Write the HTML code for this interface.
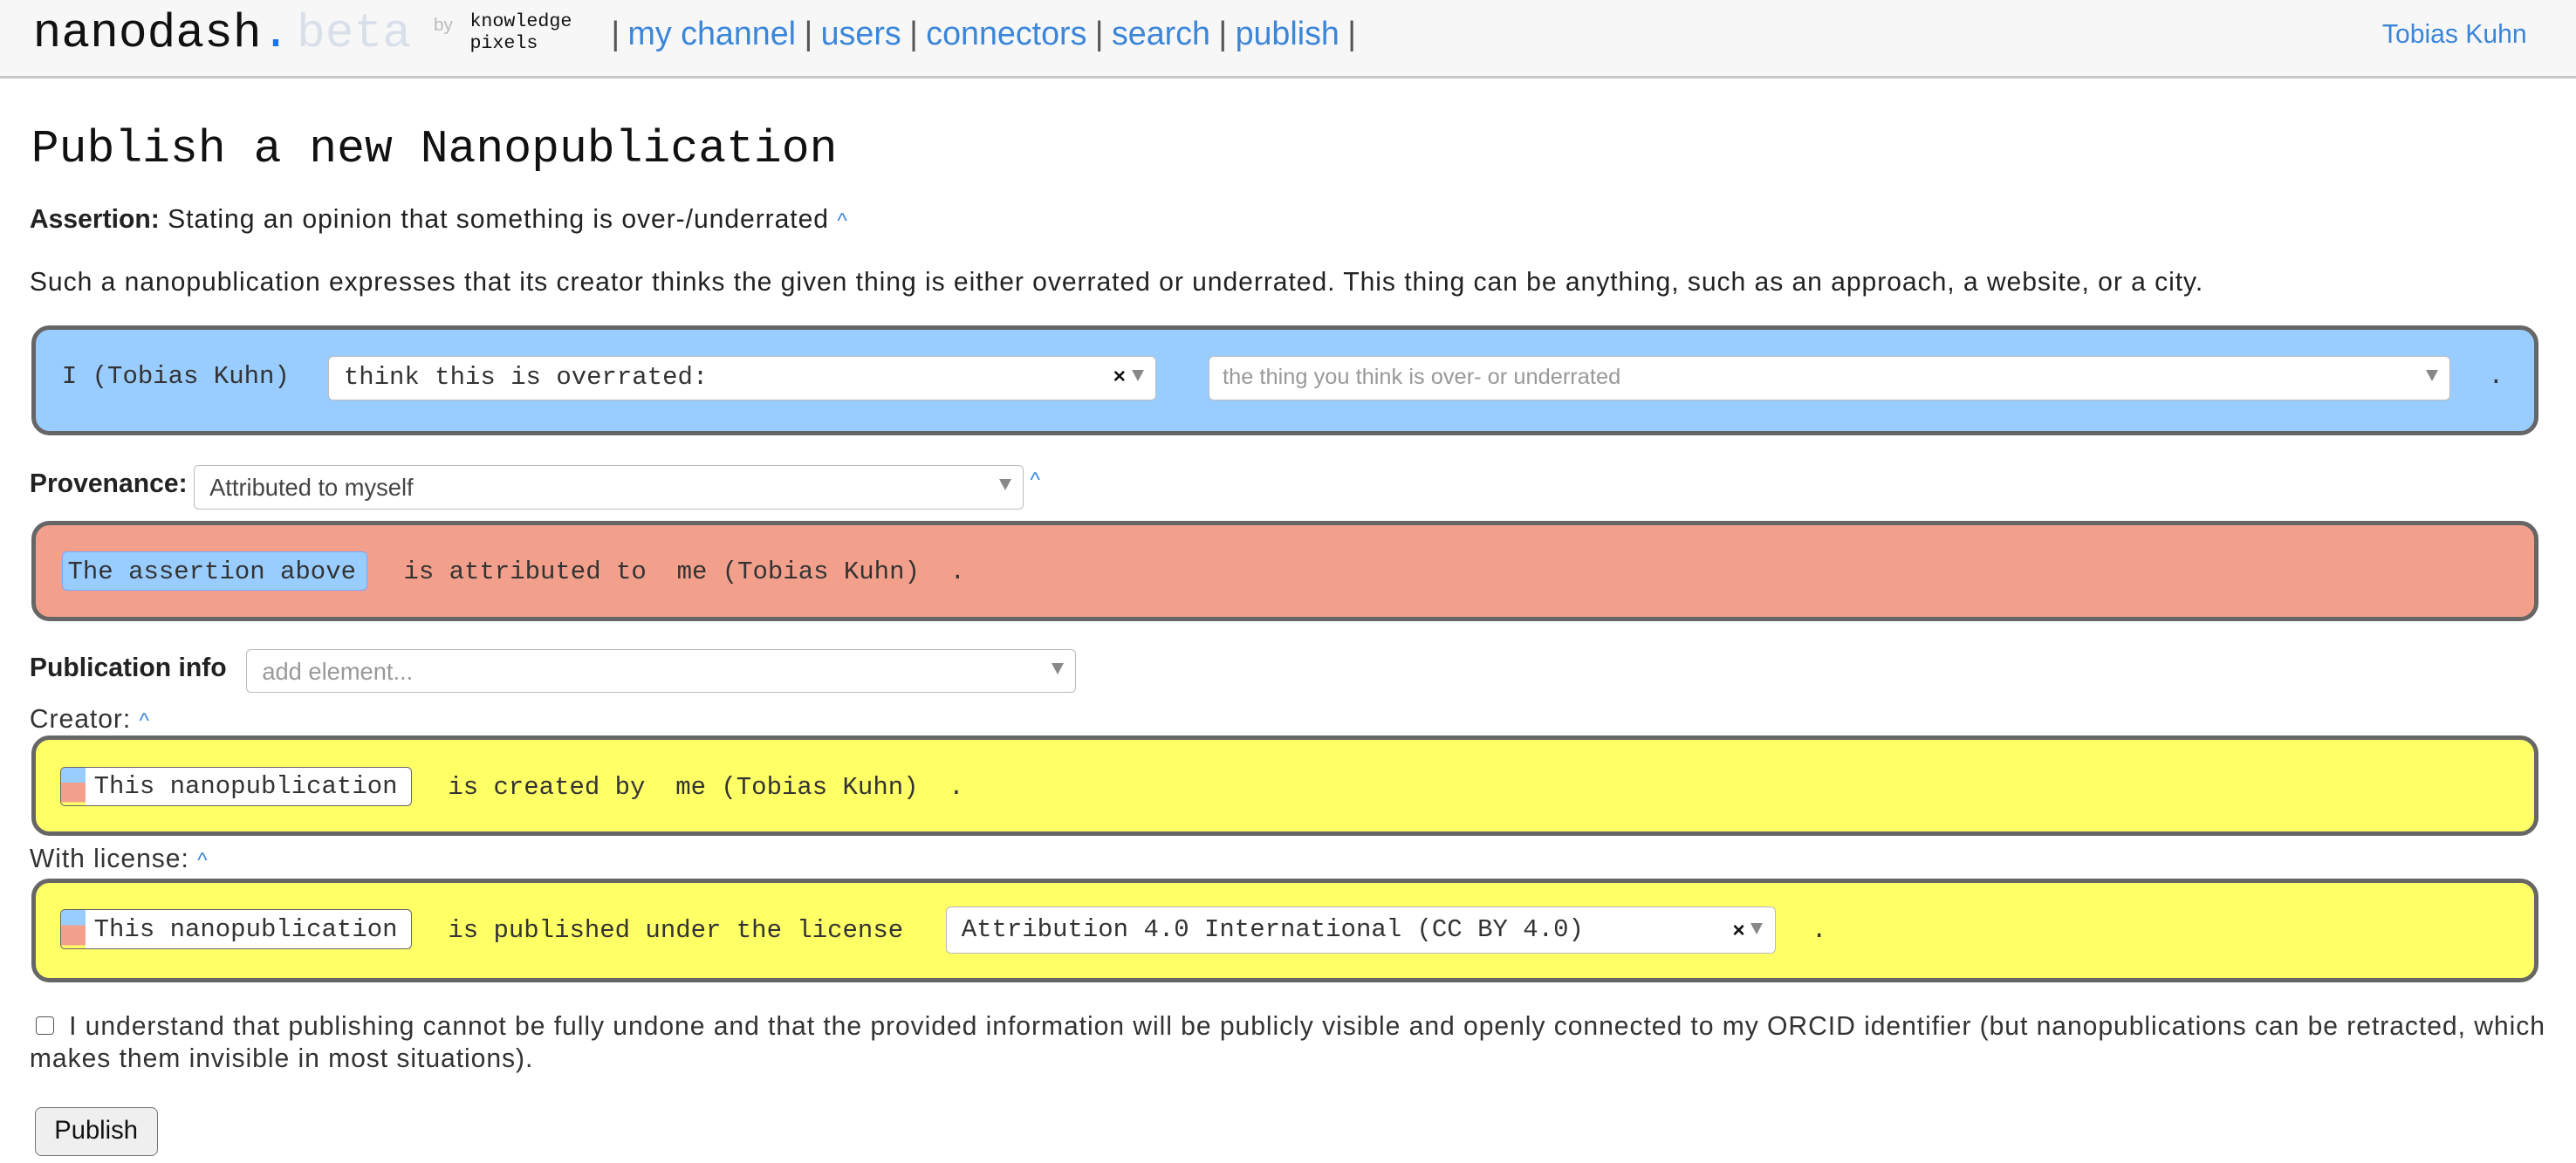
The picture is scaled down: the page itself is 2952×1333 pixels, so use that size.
<!DOCTYPE html>
<html><head><meta charset="utf-8"><style>
html{zoom:1.8827}
body{margin:0;width:1568px;height:708px;position:relative;overflow:hidden;background:#fff;font-family:"Liberation Sans",sans-serif;color:#222}
.a{position:absolute;white-space:nowrap}
.mono{font-family:"Liberation Mono",monospace}
.hdr{position:absolute;left:0;top:0;width:1568px;height:46px;background:#f7f7f7;border-bottom:2px solid #c8c8c8}
.nav a{color:#3b86d8;text-decoration:none}
.nav .p{color:#555;padding:0 5px}
.box{position:absolute;left:19px;width:1526px;border:3px solid #666;border-radius:11px;box-sizing:border-box}
.sel{position:absolute;background:#fff;border:1px solid #bbb;border-radius:3px;box-sizing:border-box;height:27px}
.arr{position:absolute;right:7px;top:8px;width:0;height:0;border-left:4px solid transparent;border-right:4px solid transparent;border-top:7px solid #888}
.x{position:absolute;right:18px;top:5px;font-weight:bold;font-size:13px;color:#111}
.t{font-size:15.4px;color:#333}
.s{font-size:16px;letter-spacing:0.5px}
.s b{letter-spacing:0}
.car{color:#3b86d8;font-size:13px}
.np{position:absolute;height:24px;background:#fff;border:1px solid #666;border-radius:3px;box-sizing:border-box;width:214px;overflow:hidden}
.np .st{position:absolute;left:0;top:0;width:15px;height:24px;background:linear-gradient(#99ccff 0 38%,#f2a08c 38% 88%,#ffff66 88%)}
</style></head><body>
<div class="hdr"></div>
<div class="a mono" style="left:20px;top:5px;font-size:29px;color:#111">nanodash<span style="color:#1a73e8">.</span><span style="color:#d9e0ea;padding-left:4px">beta</span></div>
<div class="a" style="left:264px;top:9px;font-size:11px;color:#bbb">by</div>
<div class="a mono" style="left:286px;top:7px;font-size:11.5px;line-height:13px;color:#111">knowledge<br>pixels</div>
<div class="a nav" style="left:367px;top:9px;font-size:20px;letter-spacing:0px"><span class="p">|</span><a>my channel</a><span class="p">|</span><a>users</a><span class="p">|</span><a>connectors</a><span class="p">|</span><a>search</a><span class="p">|</span><a>publish</a><span class="p">|</span></div>
<div class="a" style="left:1450px;top:12px;font-size:16px;color:#3b86d8">Tobias Kuhn</div>

<div class="a mono" style="left:19px;top:75px;font-size:28.2px;color:#111">Publish a new Nanopublication</div>
<div class="a s" style="left:18px;top:125px"><b>Assertion:</b> Stating an opinion that something is over-/underrated <span class="car">^</span></div>
<div class="a s" style="left:18px;top:163px">Such a nanopublication expresses that its creator thinks the given thing is either overrated or underrated. This thing can be anything, such as an approach, a website, or a city.</div>

<div class="box" style="top:198px;height:67px;background:#99ccff">
 <div class="a mono t" style="left:16px;top:20px">I (Tobias Kuhn)</div>
 <div class="sel" style="left:178px;top:16px;width:504px"><div class="a mono t" style="left:9px;top:4px">think this is overrated:</div><span class="x">×</span><div class="arr"></div></div>
 <div class="sel" style="left:714px;top:16px;width:756px"><div class="a" style="left:8px;top:5px;font-size:13.5px;color:#999">the thing you think is over- or underrated</div><div class="arr"></div></div>
 <div class="a mono t" style="left:1493px;top:20px">.</div>
</div>

<div class="a s" style="left:18px;top:286px"><b>Provenance:</b></div>
<div class="sel" style="left:118px;top:283px;width:505px"><div class="a" style="left:9px;top:5px;font-size:14.5px;color:#444">Attributed to myself</div><div class="arr"></div></div>
<div class="a car" style="left:627px;top:285px">^</div>

<div class="box" style="top:317px;height:61px;background:#f2a08c">
 <div class="a mono t" style="left:16px;top:16px;height:24px;width:186px;background:#99ccff;border:1px solid #7aa8ff;border-radius:3px;box-sizing:border-box;padding:3px 0 0 3px">The assertion above</div>
 <div class="a mono t" style="left:224px;top:20px">is attributed to&nbsp; me (Tobias Kuhn)&nbsp; .</div>
</div>

<div class="a s" style="left:18px;top:398px"><b>Publication info</b></div>
<div class="sel" style="left:150px;top:395px;width:505px"><div class="a" style="left:9px;top:5px;font-size:14.5px;color:#999">add element...</div><div class="arr"></div></div>
<div class="a s" style="left:18px;top:429px;color:#333">Creator: <span class="car">^</span></div>

<div class="box" style="top:448px;height:61px;background:#ffff66">
 <div class="np" style="left:15px;top:16px"><div class="st"></div><div class="a mono t" style="left:20px;top:3px">This nanopublication</div></div>
 <div class="a mono t" style="left:251px;top:20px">is created by&nbsp; me (Tobias Kuhn)&nbsp; .</div>
</div>

<div class="a s" style="left:18px;top:514px;color:#333">With license: <span class="car">^</span></div>

<div class="box" style="top:535px;height:63px;background:#ffff66">
 <div class="np" style="left:15px;top:16px"><div class="st"></div><div class="a mono t" style="left:20px;top:3px">This nanopublication</div></div>
 <div class="a mono t" style="left:251px;top:20px">is published under the license</div>
 <div class="sel" style="left:554px;top:14px;width:505px;height:29px"><div class="a mono t" style="left:9px;top:5px">Attribution 4.0 International (CC BY 4.0)</div><span class="x" style="top:7px">×</span><div class="arr" style="top:10px"></div></div>
 <div class="a mono t" style="left:1081px;top:20px">.</div>
</div>

<div class="a" style="left:22px;top:619px;width:11px;height:11px;border:1px solid #555;border-radius:2px;box-sizing:border-box"></div>
<div class="a s" style="left:42px;top:616px;color:#333">I understand that publishing cannot be fully undone and that the provided information will be publicly visible and openly connected to my ORCID identifier (but nanopublications can be retracted, which</div>
<div class="a s" style="left:18px;top:636px;color:#333">makes them invisible in most situations).</div>

<div class="a" style="left:21px;top:674px;width:75px;height:30px;background:#efefef;border:1px solid #767676;border-radius:4px;box-sizing:border-box;font-size:15.5px;text-align:center;line-height:28px;color:#111">Publish</div>
</body></html>
